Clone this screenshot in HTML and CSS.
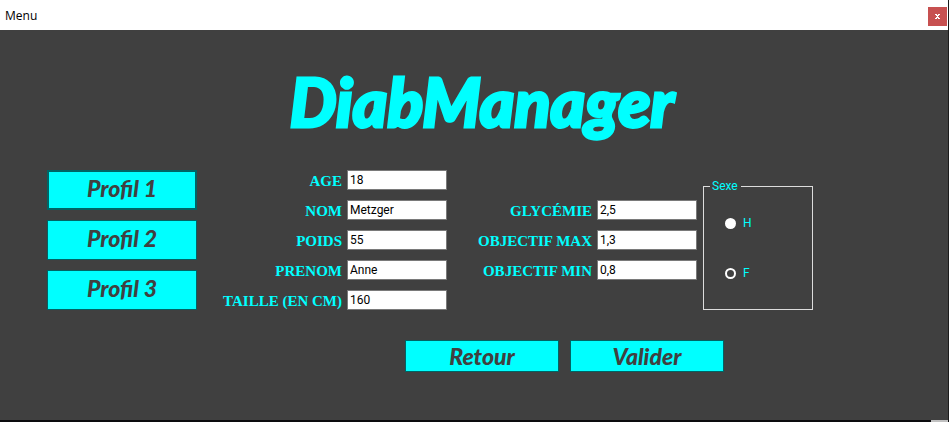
FILE: index.html
```html
<!DOCTYPE html>
<html lang="fr">
<head>
<meta charset="utf-8">
<title>Menu</title>
<link rel="stylesheet" href="styles.css">
</head>
<body>
<div class="window">
  <header class="titlebar">
    <span>Menu</span>
    <button class="close" type="button" aria-label="Fermer">
      <svg width="5" height="5" viewBox="0 0 5 5" shape-rendering="crispEdges"><path fill="#fff" d="M0 0h2v1h1v-1h2v1h-1v1h-1v1h1v1h1v1h-2v-1h-1v1h-2v-1h1v-1h1v-1h-1v-1h-1z"/></svg>
    </button>
  </header>
  <main>
    <h1>DiabManager</h1>
    <form>
      <div class="content">
        <nav class="profiles">
          <button class="btn focused" type="button">Profil 1</button>
          <button class="btn" type="button">Profil 2</button>
          <button class="btn" type="button">Profil 3</button>
        </nav>
        <div class="fields identity">
          <label for="age">AGE</label><input id="age" type="text" value="18">
          <label for="nom">NOM</label><input id="nom" type="text" value="Metzger">
          <label for="poids">POIDS</label><input id="poids" type="text" value="55">
          <label for="prenom">PRENOM</label><input id="prenom" type="text" value="Anne">
          <label for="taille">TAILLE (EN CM)</label><input id="taille" type="text" value="160">
        </div>
        <div class="fields goals">
          <label for="glycemie">GLYCÉMIE</label><input id="glycemie" type="text" value="2,5">
          <label for="max">OBJECTIF MAX</label><input id="max" type="text" value="1,3">
          <label for="min">OBJECTIF MIN</label><input id="min" type="text" value="0,8">
        </div>
        <fieldset>
          <legend>Sexe</legend>
          <label><input type="radio" name="sexe" value="H">H</label>
          <label><input type="radio" name="sexe" value="F" checked>F</label>
        </fieldset>
      </div>
      <div class="actions">
        <button class="btn" type="button">Retour</button>
        <button class="btn" type="button">Valider</button>
      </div>
    </form>
  </main>
</div>
<footer class="edge"></footer>
</body>
</html>
```
FILE: styles.css
```css
* { box-sizing: border-box; }
body {
  margin: 0;
  min-height: 100vh;
  display: flex;
  flex-direction: column;
  background: #404040;
  font-family: "Liberation Sans", Arial, sans-serif;
}
.window {
  flex: 1;
  border-right: 1px solid #1c1c1c;
}
.titlebar {
  display: flex;
  justify-content: space-between;
  align-items: center;
  height: 30px;
  padding: 0 1px 0 5px;
  background: #fff;
  color: #000;
  font: 12px "Open Sans", sans-serif;
}
.close {
  display: grid;
  place-items: center;
  width: 19px;
  height: 19px;
  margin-top: 3px;
  padding: 0;
  border: 0;
  background: #c75050;
}
h1 {
  margin: 0;
  padding: 32px 0 0 16px;
  height: 140px;
  color: #0ff;
  font: italic 900 66px/80px Lato, sans-serif;
  -webkit-text-stroke: 3px #0ff;
  text-align: center;
}
.content {
  display: flex;
  align-items: flex-start;
  padding-left: 47px;
}
.profiles {
  display: grid;
  gap: 10px;
}
.btn {
  width: 150px;
  height: 40px;
  padding: 0 0 4px;
  border: 1px solid #006464;
  background: #0ff;
  color: #404040;
  font: italic 900 23px/24px Lato, sans-serif;
}
.focused { border-width: 2px; }
.fields {
  display: grid;
  grid-template-columns: 1fr 100px;
  column-gap: 5px;
  row-gap: 10px;
}
.identity { width: 250px; }
.goals { width: 250px; margin-top: 30px; }
.fields label {
  color: #0ff;
  font: bold 15px/22px "Liberation Serif", serif;
  height: 20px;
  text-align: right;
  white-space: nowrap;
}
.fields input {
  width: 100%;
  height: 20px;
  padding: 0 2px;
  border: 1px solid #7a7a7a;
  background: #fff;
  color: #000;
  font: 12px Roboto, sans-serif;
}
fieldset {
  width: 110px;
  height: 131px;
  margin: 9px 0 0 6px;
  padding: 23px 0 0 21px;
  border: 1px solid #dcdcdc;
  color: #0ff;
  font: 12px/14px Roboto, sans-serif;
}
legend { margin-left: -15px; padding: 0 3px 0 2px; }
fieldset label {
  display: flex;
  align-items: center;
  gap: 7px;
  margin-bottom: 36px;
}
fieldset input {
  appearance: none;
  width: 11px;
  height: 11px;
  margin: 0;
  border-radius: 50%;
  background: #fff;
}
fieldset input:checked {
  border: 2px solid #fff;
  background: #404040;
}
.actions {
  display: flex;
  gap: 11px;
  padding: 30px 0 0 405px;
}
.actions .btn { width: 154px; height: 32px; padding: 0; }
.edge {
  height: 2px;
  background: linear-gradient(#c0c0c0, #c0c0c0) right 1px top / 17px 2px no-repeat #0c0c0e;
}
```
